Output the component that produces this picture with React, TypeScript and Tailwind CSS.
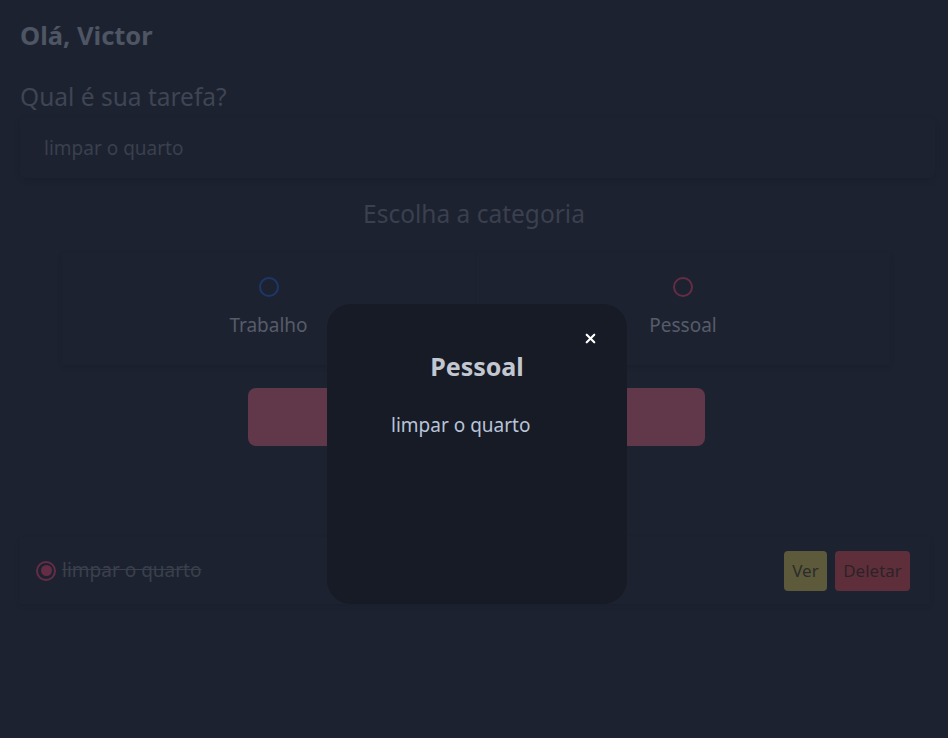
import { X } from 'lucide-react';

const FONT = "font-['Noto_Sans',sans-serif]";

export default function App() {
  return (
    <main className={`relative w-[948px] h-[738px] bg-[#1d2231] overflow-hidden ${FONT}`}>
      <div className="px-5 pt-[20px]">
        <h1 className="text-[25.5px] leading-[30px] font-bold text-[#4e5563]">Olá, Victor</h1>

        <h2 className="mt-[32px] text-[24.5px] leading-[30px] text-[#3f4553]">Qual é sua tarefa?</h2>

        <div className="mt-[6px] h-[60px] w-[915px] rounded-md shadow-[0_2px_6px_rgba(0,0,0,0.12)] flex items-center px-6">
          <span className="text-[19px] text-[#3a404d]">limpar o quarto</span>
        </div>

        <p className="mt-[21px] text-center text-[24.5px] leading-[30px] text-[#3a404e]">Escolha a categoria</p>

        <div className="mt-[24px] ml-[42px] w-[828px] h-[112px] grid grid-cols-2 shadow-[0_2px_5px_rgba(0,0,0,0.1)]">
          <div className="flex flex-col items-center pt-[24px] border-r border-[#1b202d]">
            <span className="w-[20px] h-[20px] rounded-full border-2 border-[#1d376a]" />
            <span className="mt-[14px] text-[19px] text-[#565c68]">Trabalho</span>
          </div>
          <div className="flex flex-col items-center pt-[24px]">
            <span className="w-[20px] h-[20px] rounded-full border-2 border-[#652d45]" />
            <span className="mt-[14px] text-[19px] text-[#565c68]">Pessoal</span>
          </div>
        </div>

        <div className="mt-[23px] ml-[228px] w-[457px] h-[58px] rounded-lg bg-[#613849]" />

        <div className="mt-[91px] w-[910px] h-[67px] flex items-center justify-between pl-[16px] pr-[20px] shadow-[0_2px_5px_rgba(0,0,0,0.1)]">
          <div className="flex items-center gap-[6px]">
            <span className="w-[20px] h-[20px] rounded-full border-2 border-[#652d45] flex items-center justify-center">
              <span className="w-[11px] h-[11px] rounded-full bg-[#652d45]" />
            </span>
            <span className="text-[19px] text-[#3a404b] line-through">limpar o quarto</span>
          </div>
          <div className="flex items-center gap-2">
            <button className="h-[40px] w-[43px] rounded bg-[#5c5a3a] text-[17px] text-[#2b2c2c]">Ver</button>
            <button className="h-[40px] w-[75px] rounded bg-[#5e2f3b] text-[17px] text-[#2e2228]">Deletar</button>
          </div>
        </div>
      </div>

      <div className="absolute left-[327px] top-[304px] w-[300px] h-[300px] rounded-[24px] bg-[#161b26] flex flex-col">
        <div className="flex justify-end pt-[27px] pr-[29px]">
          <X className="w-[15px] h-[15px] text-white" strokeWidth={3.5} />
        </div>
        <h3 className="mt-[6px] text-center text-[25px] leading-[28px] font-bold text-[#c3c7d0]">Pessoal</h3>
        <p className="mt-[31px] pl-[64px] text-[19px] text-[#b9c4d8]">limpar o quarto</p>
      </div>
    </main>
  );
}
